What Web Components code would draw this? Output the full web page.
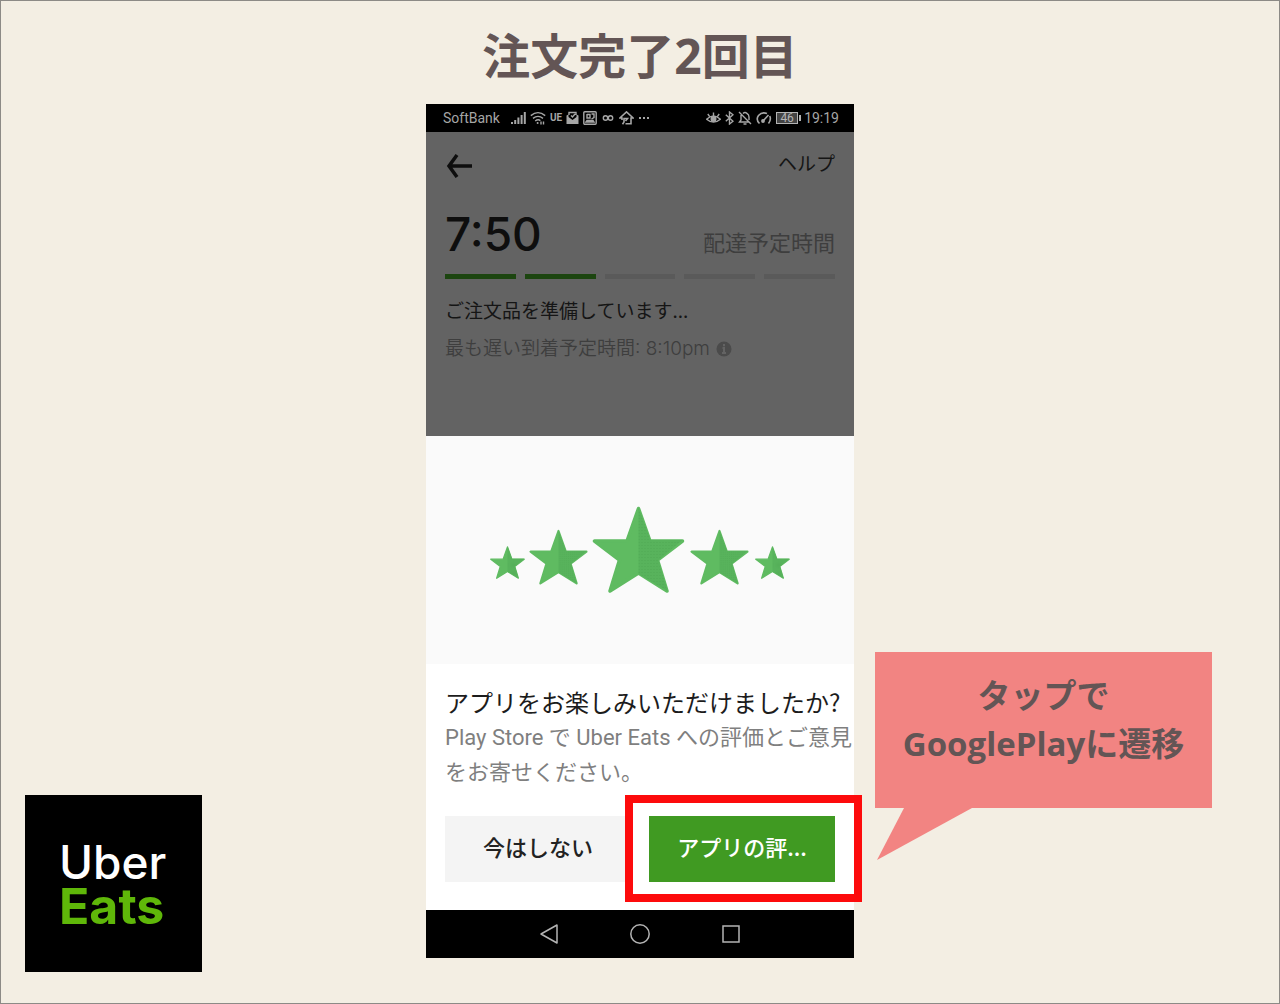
<!DOCTYPE html>
<html lang="ja">
<head>
<meta charset="utf-8">
<title>注文完了2回目</title>
<style>
  body { margin: 0; background: #f3eee3; font-family: "Open Sans", "Noto Sans CJK JP", sans-serif; }
</style>
</head>
<body>
<guide-slide>
  <h1 slot="title">注文完了2回目</h1>
  <brand-logo slot="brand"><span slot="first">Uber</span><span slot="second">Eats</span></brand-logo>
  <phone-frame slot="phone">
    <status-bar slot="status"></status-bar>
    <order-status></order-status>
    <star-banner></star-banner>
    <review-sheet>
      <span slot="heading">アプリをお楽しみいただけましたか?</span>
      <span slot="text">Play Store で Uber Eats への評価とご意見をお寄せください。</span>
    </review-sheet>
    <nav-bar slot="nav"></nav-bar>
  </phone-frame>
  <call-out slot="note">タップで<br>GooglePlayに遷移</call-out>
</guide-slide>

<script>
const define = (name, html) => {
  const template = document.createElement('template');
  template.innerHTML = html;
  customElements.define(name, class extends HTMLElement {
    constructor() {
      super();
      this.attachShadow({ mode: 'open' }).append(template.content.cloneNode(true));
    }
  });
};

define('guide-slide', `
<style>
  :host { display: grid; box-sizing: border-box; min-height: 100vh; border: 1px solid #8c8a86;
    grid-template-columns: 1fr 428px 1fr; grid-template-rows: auto 1fr; row-gap: 16px; }
  header { grid-column: 1 / -1; padding-top: 23px; text-align: center; }
  ::slotted(h1) { margin: 0; font-size: 48px; line-height: 64px; font-weight: 700; color: #635555; }
  .brand, .note { display: flex; align-items: flex-end; }
  .brand { padding: 0 24px 31px; }
  .note { padding: 0 67px 195px 21px; }
  .note ::slotted(*) { flex: 1; }
</style>
<header><slot name="title"></slot></header>
<div class="brand"><slot name="brand"></slot></div>
<main><slot name="phone"></slot></main>
<div class="note"><slot name="note"></slot></div>`);

define('brand-logo', `
<style>
  :host { display: flex; flex-direction: column; justify-content: center; box-sizing: border-box;
    width: 177px; height: 177px; padding-left: 34px; background: #000;
    font-family: Inter, sans-serif; line-height: 44px; }
  ::slotted(span) { display: block; }
  .first { color: #fff; font-size: 46px; font-weight: 500; }
  .second { color: #5fb709; font-size: 50px; font-weight: 700; }
</style>
<div class="first"><slot name="first"></slot></div>
<div class="second"><slot name="second"></slot></div>`);

define('phone-frame', `
<style>
  :host { display: block; background: #fff; }
</style>
<slot name="status"></slot><slot></slot><slot name="nav"></slot>`);

define('status-bar', `
<style>
  :host { display: flex; justify-content: space-between; align-items: center; box-sizing: border-box;
    height: 28px; padding: 0 15px 0 17px; background: #000; color: #a6a6a6;
    font-family: Roboto, sans-serif; font-size: 14px; line-height: 28px; }
  div { display: flex; align-items: center; gap: 4px; }
  svg { display: block; fill: none; stroke: currentColor; stroke-width: 1.4; }
  .carrier { margin-right: 7px; }
  .ue { font-size: 10px; font-weight: 700; }
  .battery { box-sizing: border-box; position: relative; width: 22px; height: 12px; border: 1px solid currentColor;
    background: #444; color: #b4b4b4; font-size: 12px; line-height: 10px; text-align: center; margin-right: 2px; }
  .battery::after { content: ""; position: absolute; right: -4px; top: 2px; width: 2px; height: 6px; background: currentColor; }
</style>
<div>
  <span class="carrier">SoftBank</span>
  <svg width="15" height="14" viewBox="0 0 15 14"><path d="M1 13v-2M4.200 13V9M7.400 13V6.500M10.600 13V4M13.800 13V1" stroke-width="2"/></svg>
  <svg width="16" height="14" viewBox="0 0 16 14"><path d="M.8 4.6Q8-1.4 15.2 4.6M3 7.4q5-4 10 0M5.2 10q2.8-2.2 5.2-.4"/><circle cx="7.6" cy="12" r="1" fill="currentColor" stroke="none"/><path d="M11 10.500v3M13.500 10.500v3"/></svg>
  <span class="ue">UE</span>
  <svg width="13" height="14" viewBox="0 0 13 14"><path d="M.5 4.500 2.500 3.500V6L6.500 9l4-3V3.500l2 1V13H.5z" fill="currentColor" stroke="none"/><path d="M3 4V1.500H10V4M5 4.500 6.500 6 9 3"/></svg>
  <svg width="14" height="14" viewBox="0 0 14 14"><rect x=".8" y=".8" width="12.400" height="12.400" rx="1"/><path d="M4 3v4h3V3.500H4M8.500 3H11v3.500L8.500 8M3 11l1-1.500h6l1 1.500z" stroke-width="1.400"/></svg>
  <svg width="14" height="14" viewBox="0 0 14 14"><circle cx="4.500" cy="7" r="2.200"/><circle cx="9.500" cy="7" r="2.200"/></svg>
  <svg width="15" height="14" viewBox="0 0 15 14"><path d="M3 9V7H.8L7.500.9 14.200 7H12v5.800H6.500M3.500 13.200 5 11V7.500h3.500L6.500 10" stroke-width="1.600"/></svg>
  <svg width="13" height="14" viewBox="0 0 13 14"><path d="M1 7h2m2 0h2m2 0h2" stroke-width="1.800"/></svg>
</div>
<div>
  <svg width="15" height="14" viewBox="0 0 15 14"><path d="M.6 8.200Q7.500 1.600 14.400 8.200 7.500 14 .6 8.200zM7.500 4.500v-3M3.500 5.300 1.800 3M11.500 5.300 13.200 3"/><circle cx="7.500" cy="8" r="2.300" fill="currentColor"/></svg>
  <svg width="9" height="14" viewBox="0 0 9 14"><path d="M.8 3.800 8 10.200 4.500 13V1L8 3.800.8 10.200"/></svg>
  <svg width="14" height="14" viewBox="0 0 14 14"><path d="M1 1 13 13M3 4v5l-1.500 2H11M5 2.500Q7 .6 9 2.500q2 1 2 3.500v3M5.500 13h3"/></svg>
  <svg width="16" height="14" viewBox="0 0 16 14"><path d="M3.500 12.500Q-.5 8.500 2.500 4.500 6 .5 11 2.500M13.800 5q1.600 4-1.300 7.500M7 10l5.500-6" stroke-width="1.600"/><circle cx="7" cy="10" r="1.200" fill="currentColor"/></svg>
  <span class="battery">46</span>
  <span>19:19</span>
</div>`);

define('order-status', `
<style>
  :host { display: flex; flex-direction: column; box-sizing: border-box; height: 304px; padding: 16px 19px 0;
    background: #636363; color: #151515; font-size: 19px; line-height: 30px;
    font-family: "Noto Sans CJK JP", sans-serif; }
  .row { display: flex; justify-content: space-between; }
  button, a { font: inherit; color: inherit; background: none; border: 0; padding: 0; text-decoration: none; }
  button { padding-top: 5px; }
  svg { display: block; }
  .eta { align-items: center; margin-top: 28px; line-height: 56px; color: #3e3e3e; }
  .eta span { padding-top: 14px; line-height: 38px; font-size: 22px; }
  .eta strong { font: 500 46px/56px Inter, sans-serif; color: #0e0e0e; }
  .bars { display: grid; grid-template-columns: repeat(5, 1fr); gap: 9px; margin: 12px 0 16px; }
  .bars i { height: 5px; background: #5a5a5a; }
  .bars .on { background: #1c4510; }
  p { margin: 0; }
  .late { display: flex; align-items: center; gap: 6px; margin-top: 9px; color: #3e3e3e;
    font-family: Inter, "Noto Sans CJK JP", sans-serif; font-weight: 350; }
</style>
<div class="row">
  <button aria-label="戻る"><svg width="27" height="24" viewBox="0 0 27 24" fill="none" stroke="#0e0e0e" stroke-width="3.500"><path d="M4 12H27M12 1 4 12l8 11"/></svg></button>
  <a href="#help">ヘルプ</a>
</div>
<div class="row eta"><strong>7:50</strong><span>配達予定時間</span></div>
<div class="bars"><i class="on"></i><i class="on"></i><i></i><i></i><i></i></div>
<p>ご注文品を準備しています...</p>
<p class="late">最も遅い到着予定時間: 8:10pm
  <svg width="16" height="16" viewBox="0 0 16 16"><circle cx="8" cy="8" r="7.500" fill="#4b4b4b"/><path d="M8 3v2.200M6.500 7H8v5M6 12h4" stroke="#636363" stroke-width="2" fill="none"/></svg></p>`);

define('star-banner', `
<style>
  :host { display: flex; justify-content: center; align-items: center; height: 228px; background: #fafafa; }
  svg { display: block; }
</style>
<svg width="302" height="88" viewBox="0 0 302 88" role="img" aria-label="5つ星">
  <defs>
    <pattern id="dots" width="3" height="3" patternUnits="userSpaceOnUse"><rect width="3" height="3" fill="#58b35c"/><rect width="1" height="1" fill="#4fa953"/></pattern>
    <g id="star">
      <path d="M0-42.500 11.500-10H44L19 9 28.500 40 0 22-28.500 40-19 9-44-10H-11.500z" fill="#5fbb61" stroke="#5fbb61" stroke-width="3.500" stroke-linejoin="round"/>
      <path d="M0-43.500 12-11H44L20 9 29 40 0 23z" fill="url(#dots)"/>
    </g>
  </defs>
  <use href="#star" transform="translate(18.500 57) scale(.38)"/>
  <use href="#star" transform="translate(69.500 52) scale(.635)"/>
  <use href="#star" transform="translate(149.500 45)"/>
  <use href="#star" transform="translate(230.500 52) scale(.635)"/>
  <use href="#star" transform="translate(283.500 57) scale(.38)"/>
</svg>`);

define('review-sheet', `
<style>
  :host { display: block; box-sizing: border-box; height: 246px; padding: 20px 0 0 19px; background: #fff; }
  h2, p { margin: 0; }
  h2 { font: 400 24px/36px "Noto Sans CJK JP", sans-serif; color: #1c1c1c; white-space: nowrap; }
  p { font: 400 22px/35px Roboto, "Noto Sans CJK JP", sans-serif; color: #7f7f7f; }
  .actions { display: grid; grid-template-columns: 1fr 1fr; gap: 18px; margin: 26px 19px 0 0; }
  button { height: 66px; border: 0; padding: 0 0 6px; font: 500 22px/32px "Noto Sans CJK JP", sans-serif;
    color: #222; background: #f4f4f4; }
  .primary { position: relative; color: #fff; background: #409a22; }
  .primary::after { content: ""; position: absolute; inset: -21px -27px -20px -24px; border: 8px solid #fd0b0c; }
</style>
<h2><slot name="heading"></slot></h2>
<p><slot name="text"></slot></p>
<div class="actions"><button>今はしない</button><button class="primary">アプリの評...</button></div>`);

define('nav-bar', `
<style>
  :host { display: flex; justify-content: center; align-items: center; gap: 71px; height: 48px; background: #000; }
  button { background: none; border: 0; padding: 0; }
  svg { display: block; fill: none; stroke: #b4b4b4; stroke-width: 1.500; }
</style>
<button aria-label="戻る"><svg width="20" height="20" viewBox="0 0 20 20"><path d="M18 1v18L2 10z" stroke-linejoin="round"/></svg></button>
<button aria-label="ホーム"><svg width="20" height="20" viewBox="0 0 20 20"><circle cx="10" cy="10" r="9.200"/></svg></button>
<button aria-label="履歴"><svg width="20" height="20" viewBox="0 0 20 20"><rect x="2" y="2" width="16" height="16"/></svg></button>`);

define('call-out', `
<style>
  :host { display: block; position: relative; box-sizing: border-box; padding: 20px 0 40px; background: #f28482;
    color: #635555; font-size: 33px; line-height: 48px; font-weight: 700; text-align: center; }
  svg { position: absolute; left: 0; top: 100%; }
</style>
<slot></slot>
<svg width="100" height="53" viewBox="0 0 100 53"><path d="M29 0H97L2 52z" fill="#f28482"/></svg>`);
</script>
</body>
</html>
